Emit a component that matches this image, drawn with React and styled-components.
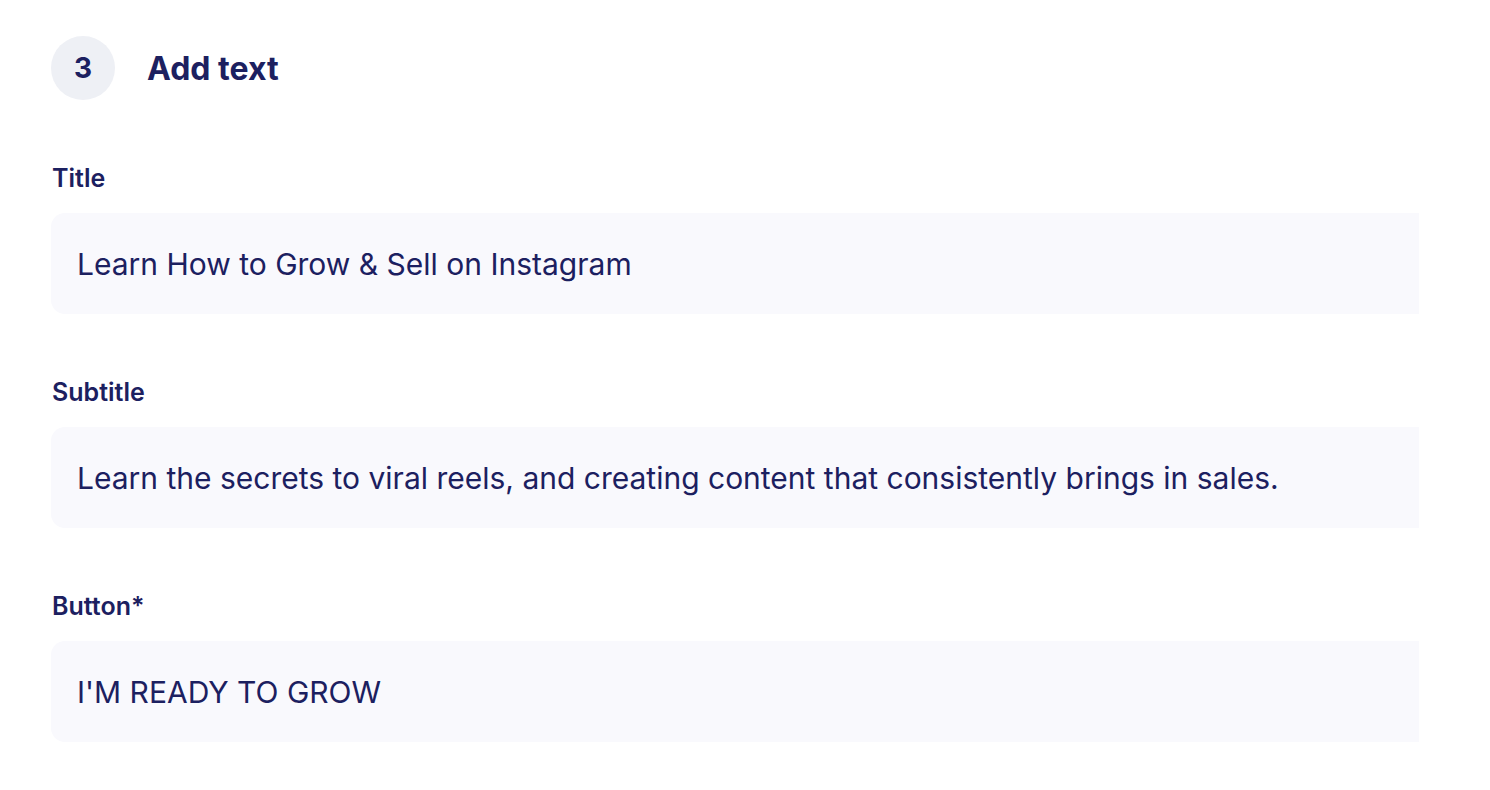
import React from 'react';
import styled, { createGlobalStyle } from 'styled-components';

const GlobalStyle = createGlobalStyle`
  body {
    margin: 0;
    background: #ffffff;
    font-family: Inter, "Noto Sans", sans-serif;
    color: #1c2060;
  }
`;

const Page = styled.section`
  width: 1419px;
  padding: 36px 0 0 51px;
  box-sizing: border-box;
  overflow: hidden;
`;

const StepHeader = styled.div`
  display: flex;
  align-items: center;
  gap: 32px;
  margin-bottom: 63px;
`;

const StepBadge = styled.div`
  width: 64px;
  height: 64px;
  border-radius: 50%;
  background: #eef0f5;
  display: flex;
  align-items: center;
  justify-content: center;
  font-size: 28px;
  font-weight: 700;
`;

const StepTitle = styled.h2`
  margin: 0;
  font-size: 32px;
  font-weight: 700;
`;

const Field = styled.div`
  display: flex;
  flex-direction: column;
  gap: 20px;
  margin-bottom: 63px;
`;

const Label = styled.label`
  font-size: 25px;
  font-weight: 600;
  line-height: 30px;
  padding-left: 1px;
`;

const Input = styled.input`
  width: 1420px;
  height: 101px;
  box-sizing: border-box;
  border: none;
  outline: none;
  border-radius: 14px;
  background: #f9f9fd;
  padding: 0 26px;
  font-family: Inter, "Noto Sans", sans-serif;
  font-size: 30px;
  color: #1c2060;
`;

const fields = [
  { label: 'Title', value: 'Learn How to Grow & Sell on Instagram' },
  { label: 'Subtitle', value: 'Learn the secrets to viral reels, and creating content that consistently brings in sales.' },
  { label: 'Button*', value: "I'M READY TO GROW" },
];

const App = () => {
  return (
    <>
      <GlobalStyle />
      <Page>
        <StepHeader>
          <StepBadge>3</StepBadge>
          <StepTitle>Add text</StepTitle>
        </StepHeader>
        {fields.map((f) => (
          <Field key={f.label}>
            <Label>{f.label}</Label>
            <Input defaultValue={f.value} readOnly />
          </Field>
        ))}
      </Page>
    </>
  );
};

export default App;
